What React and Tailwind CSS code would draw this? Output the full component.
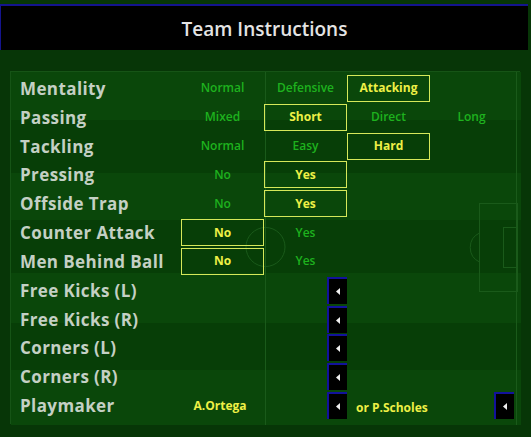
import React from 'react';

// 列の中身: 選択肢テキスト、選択済みボックス、矢印ボタン
const rows = [
  { label: 'Mentality', cells: [['Normal'], ['Defensive'], ['Attacking', true]] },
  { label: 'Passing', cells: [['Mixed'], ['Short', true], ['Direct'], ['Long']] },
  { label: 'Tackling', cells: [['Normal'], ['Easy'], ['Hard', true]] },
  { label: 'Pressing', cells: [['No'], ['Yes', true]] },
  { label: 'Offside Trap', cells: [['No'], ['Yes', true]] },
  { label: 'Counter Attack', cells: [['No', true], ['Yes']] },
  { label: 'Men Behind Ball', cells: [['No', true], ['Yes']] },
  { label: 'Free Kicks (L)', arrow: true },
  { label: 'Free Kicks (R)', arrow: true },
  { label: 'Corners (L)', arrow: true },
  { label: 'Corners (R)', arrow: true },
  { label: 'Playmaker', playmaker: true },
];

const font = { fontFamily: '"Open Sans", "DejaVu Sans", sans-serif' };

const ArrowButton = () => (
  <div className="w-[20px] h-[27px] bg-black border-l-2 border-t-2 border-[#12129c] flex items-center justify-center">
    <svg width="4" height="7" viewBox="0 0 4 7">
      <path d="M0 3.5 L4 0 L4 7 Z" fill="#f0f0f0" />
    </svg>
  </div>
);

const Option = ({ text, selected }) => (
  <div className="w-[83px] flex items-center justify-center">
    {selected ? (
      <div className="w-[83px] h-[27px] border border-[#d6e85a] flex items-center justify-center text-[12px] font-bold text-[#eef046]">
        {text}
      </div>
    ) : (
      <span className="text-[12px] font-semibold text-[#1eb21e]">{text}</span>
    )}
  </div>
);

// 背景のピッチ（芝のストライプとライン）
const Pitch = () => (
  <svg className="absolute inset-0 pointer-events-none" width="510" height="353">
    <rect x="0" y="0" width="510" height="353" fill="#0a470a" />
    <rect x="0" y="48" width="510" height="53" fill="#073e07" />
    <rect x="0" y="148" width="510" height="53" fill="#073e07" />
    <rect x="0" y="251" width="510" height="47" fill="#073e07" />
    <g stroke="#1a5a1a" strokeWidth="1" fill="none">
      <line x1="254.5" y1="0" x2="254.5" y2="353" />
      <circle cx="254.5" cy="175" r="19.5" />
      <rect x="468.5" y="131.5" width="38" height="88" />
      <rect x="492.5" y="155.5" width="14" height="40" />
      <path d="M468.5 161 A 16 16 0 0 0 468.5 190" />
      <line x1="505.5" y1="0" x2="505.5" y2="353" />
    </g>
  </svg>
);

export default function App() {
  return (
    <div className="w-[531px] h-[437px] bg-[#073607] overflow-hidden" style={font}>
      <div className="pt-[4px]">
        <div className="w-[528px] h-[46px] bg-black border-t-2 border-l border-[#14148e] flex items-center justify-center">
          <span className="text-[19px] font-semibold text-[#e4e4e4] mt-[2px]">Team Instructions</span>
        </div>
      </div>

      <div className="ml-[10px] mt-[21px] w-[510px] h-[353px] border border-[#165416] relative">
        <Pitch />
        <div className="relative grid grid-rows-12 h-[346px] mt-[2px]">
          {rows.map((row) => (
            <div key={row.label} className="flex items-center">
              <div className="w-[170px] pl-[9px] text-[17px] font-bold text-[#c4d0c4] leading-none whitespace-nowrap tracking-[0.4px]">
                {row.label}
              </div>
              {row.cells &&
                row.cells.map(([text, selected]) => (
                  <Option key={text} text={text} selected={selected} />
                ))}
              {row.arrow && (
                <>
                  <div className="w-[83px]" />
                  <div className="w-[83px] flex justify-end">
                    <ArrowButton />
                  </div>
                </>
              )}
              {row.playmaker && (
                <>
                  <div className="w-[78px] flex justify-center">
                    <span className="text-[12px] font-bold text-[#eef046]">A.Ortega</span>
                  </div>
                  <div className="w-[88px] flex justify-end">
                    <ArrowButton />
                  </div>
                  <div className="w-[83px] pl-[9px]">
                    <span className="text-[12px] font-bold text-[#eef046]">or P.Scholes</span>
                  </div>
                  <div className="w-[84px] flex justify-end">
                    <ArrowButton />
                  </div>
                </>
              )}
            </div>
          ))}
        </div>
      </div>
    </div>
  );
}
